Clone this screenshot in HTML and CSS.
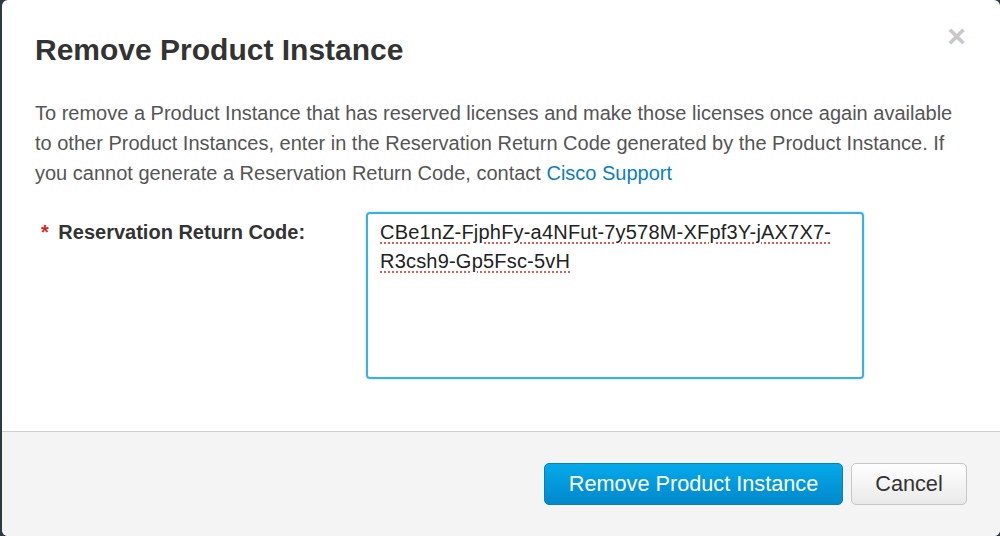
FILE: index.html
```html
<!DOCTYPE html>
<html lang="en">
<head>
  <meta charset="UTF-8">
  <title>Remove Product Instance</title>
  <link rel="stylesheet" href="styles.css">
</head>
<body>
  <div class="modal">
    <header class="modal-header">
      <h1>Remove Product Instance</h1>
      <span class="close">&times;</span>
    </header>

    <section class="modal-body">
      <p class="intro">
        To remove a Product Instance that has reserved licenses and make those licenses once again available<br>
        to other Product Instances, enter in the Reservation Return Code generated by the Product Instance. If<br>
        you cannot generate a Reservation Return Code, contact <a href="#">Cisco Support</a>
      </p>

      <div class="form-row">
        <label class="field-label"><span class="required">*</span> Reservation Return Code:</label>
        <div class="code-box">
          <span class="misspelled">CBe1nZ-FjphFy-a4NFut-7y578M-XFpf3Y-jAX7X7-</span><br>
          <span class="misspelled">R3csh9-Gp5Fsc-5vH</span>
        </div>
      </div>
    </section>

    <footer class="modal-footer">
      <button class="btn btn-primary">Remove Product Instance</button>
      <button class="btn btn-default">Cancel</button>
    </footer>
  </div>
</body>
</html>
```

FILE: styles.css
```css
/* Fond sombre derrière la fenêtre */
html, body {
  margin: 0;
  padding: 0;
  height: 100%;
}

body {
  background-color: #2c3a44;
  font-family: "Liberation Sans", Arial, sans-serif;
  color: #333;
  padding-left: 2px;
  box-sizing: border-box;
}

.modal {
  height: 536px;
  display: flex;
  flex-direction: column;
  background-color: white;
  border-radius: 6px;
  overflow: hidden;
}

.modal-header {
  display: flex;
  justify-content: space-between;
  align-items: flex-start;
  padding: 32px 34px 0 33px;
}

.modal-header h1 {
  margin: 0;
  font-size: 30px;
  line-height: 36px;
  font-weight: bold;
  color: #333;
}

.close {
  font-size: 32px;
  line-height: 22px;
  font-weight: bold;
  color: #c8c8c8;
  margin-top: -7px;
}

.modal-body {
  flex: 1;
  padding: 0 33px;
}

.intro {
  margin: 30px 0 0;
  font-size: 20px;
  line-height: 30px;
  color: #555;
  white-space: nowrap;
}

.intro a {
  color: #0a7fc2;
  text-decoration: none;
}

.form-row {
  display: flex;
  align-items: flex-start;
  margin-top: 24px;
}

.field-label {
  width: 325px;
  padding: 8px 0 0 6px;
  font-size: 20px;
  font-weight: bold;
  line-height: 24px;
  color: #333;
}

.required {
  color: #e2231a;
  margin-right: 4px;
}

.code-box {
  width: 498px;
  height: 167px;
  box-sizing: border-box;
  padding: 4px 12px;
  border: 2px solid #3cb0e6;
  border-radius: 4px;
  box-shadow: 0 0 2px rgba(60, 176, 230, 0.6);
  font-size: 20px;
  letter-spacing: 0.2px;
  line-height: 29px;
  color: #222;
}

.misspelled {
  text-decoration: underline dotted #e8574f;
  text-decoration-thickness: 2px;
  text-underline-offset: 3px;
}

.modal-footer {
  display: flex;
  justify-content: flex-end;
  gap: 8px;
  height: 105px;
  box-sizing: border-box;
  padding: 31px 33px 0;
  background-color: #f4f4f4;
  border-top: 1px solid #cfcfcf;
}

.btn {
  height: 42px;
  box-sizing: border-box;
  padding: 0 20px;
  font-family: "Liberation Sans", Arial, sans-serif;
  font-size: 21.7px;
  border-radius: 5px;
  cursor: pointer;
}

.btn-primary {
  width: 299px;
  color: white;
  background: linear-gradient(#05a9ea, #0288cc);
  border: 1px solid #0a7fc0;
}

.btn-default {
  width: 116px;
  color: #333;
  background: linear-gradient(#ffffff, #e9e9e9);
  border: 1px solid #c6c6c6;
}
```
